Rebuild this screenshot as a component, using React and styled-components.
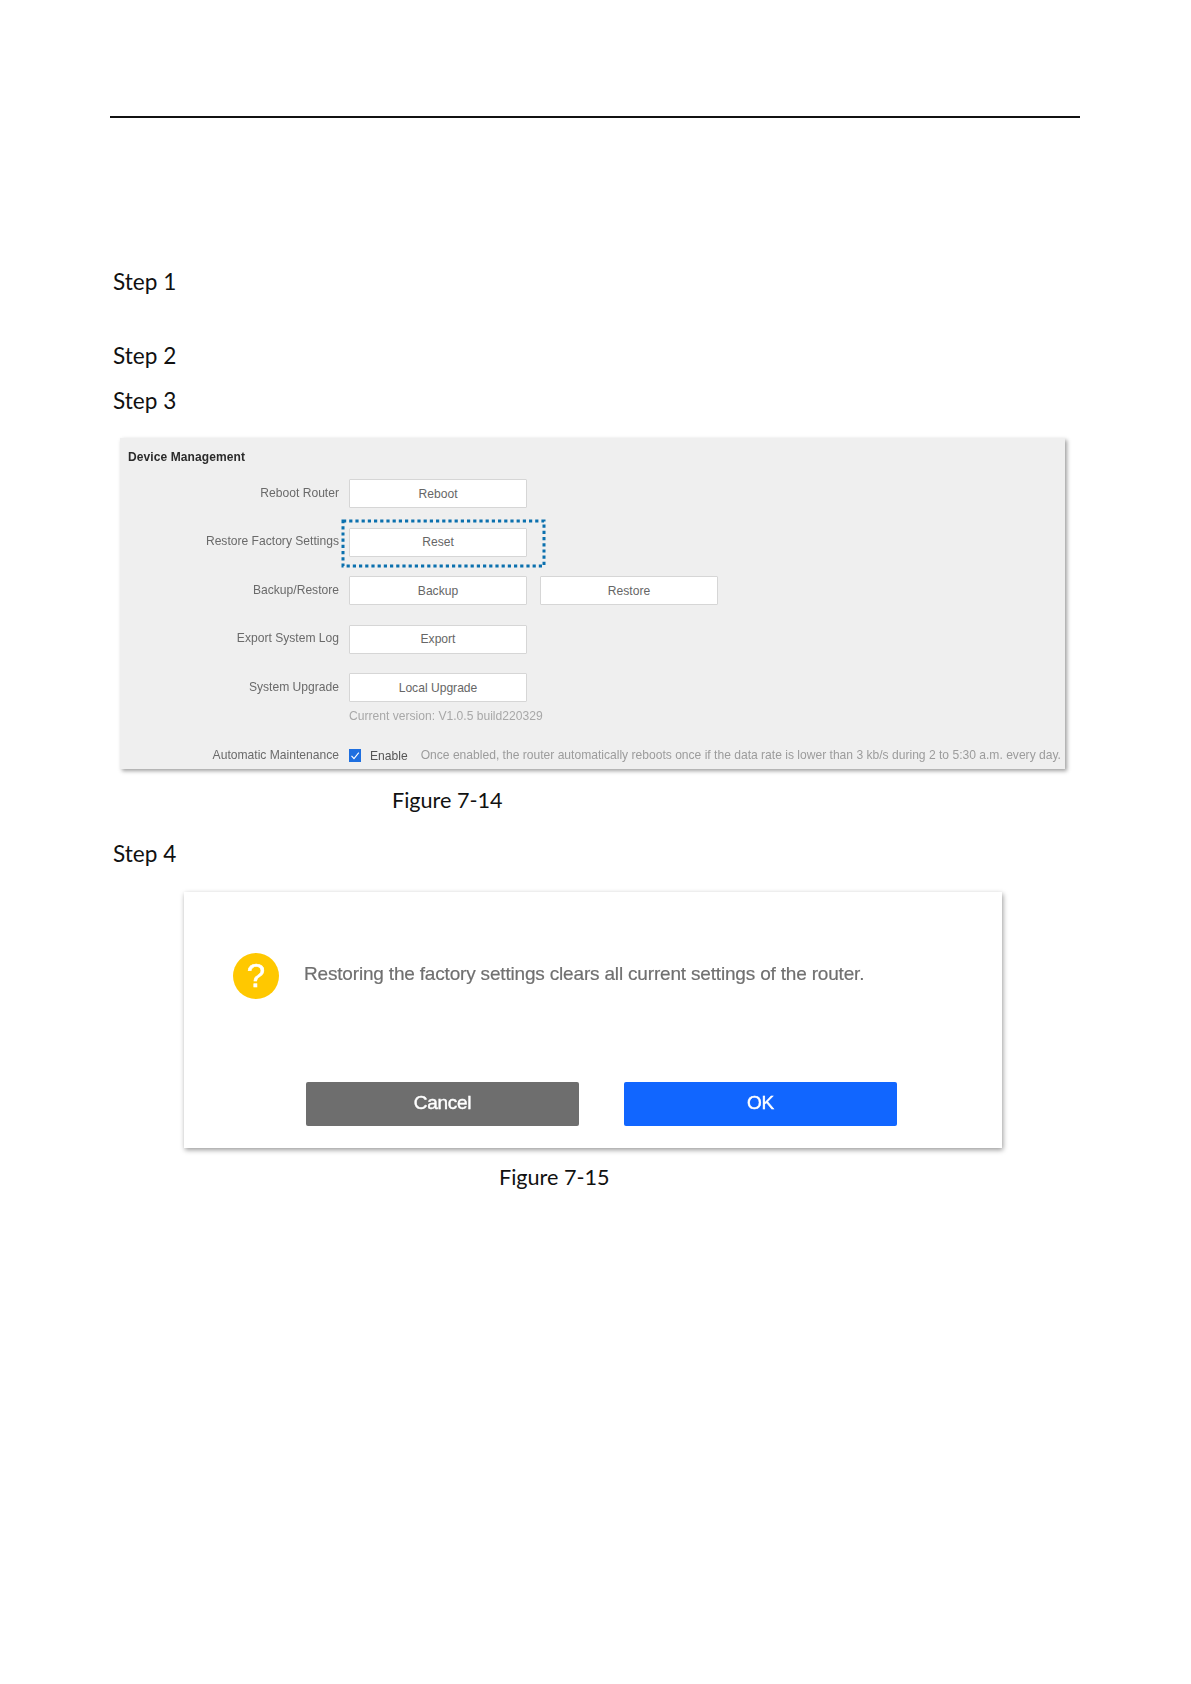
import styled, { createGlobalStyle } from 'styled-components';

const GlobalStyle = createGlobalStyle`
  html, body {
    margin: 0;
    padding: 0;
    background: #fff;
  }
`;

const rows = [
  { label: 'Reboot Router', buttons: ['Reboot'] },
  { label: 'Restore Factory Settings', buttons: ['Reset'], marked: true },
  { label: 'Backup/Restore', buttons: ['Backup', 'Restore'] },
  { label: 'Export System Log', buttons: ['Export'] },
  { label: 'System Upgrade', buttons: ['Local Upgrade'] },
];

const App = () => {
  return (
    <Page>
      <GlobalStyle />
      <Rule />

      <Step $top={149}>Step 1</Step>
      <Step $top={44}>Step 2</Step>
      <Step $top={15}>Step 3</Step>

      <Panel>
        <PanelTitle>Device Management</PanelTitle>
        <Rows>
          {rows.map((row) => (
            <Row key={row.label}>
              <RowLabel>{row.label}</RowLabel>
              {row.buttons.map((text) => (
                <PanelButton key={text}>
                  {text}
                  {row.marked && (
                    <Marker width="205" height="49" viewBox="0 0 205 49">
                      <rect
                        x="2"
                        y="2"
                        width="201"
                        height="45"
                        fill="none"
                        stroke="#0b70ae"
                        strokeWidth="3"
                        strokeDasharray="3.2 3"
                      />
                    </Marker>
                  )}
                </PanelButton>
              ))}
            </Row>
          ))}
        </Rows>
        <Version>Current version: V1.0.5 build220329</Version>
        <AutoRow>
          <RowLabel>Automatic Maintenance</RowLabel>
          <Check>
            <svg width="12" height="13" viewBox="0 0 12 13">
              <path d="M2.5 6.8 L5 9.6 L9.8 3.6" fill="none" stroke="#fff" strokeWidth="1.1" />
            </svg>
          </Check>
          <Enable>Enable</Enable>
          <Hint>
            Once enabled, the router automatically reboots once if the data rate is lower than 3 kb/s during 2 to 5:30 a.m. every day.
          </Hint>
        </AutoRow>
      </Panel>

      <Caption $left={282} $top={16}>Figure 7-14</Caption>
      <Step $top={24}>Step 4</Step>

      <Dialog>
        <Message>
          <QuestionIcon>?</QuestionIcon>
          <MessageText>Restoring the factory settings clears all current settings of the router.</MessageText>
        </Message>
        <DialogButtons>
          <DialogButton $bg="#6e6e6e">Cancel</DialogButton>
          <DialogButton $bg="#1166ff">OK</DialogButton>
        </DialogButtons>
      </Dialog>

      <Caption $left={389} $top={14}>Figure 7-15</Caption>
    </Page>
  );
};

const Page = styled.div`
  box-sizing: border-box;
  width: 1191px;
  height: 1684px;
  padding: 116px 110px 0;
  overflow: hidden;
  background: #fff;
`;

const Rule = styled.div`
  width: 970px;
  height: 2px;
  background: #111;
`;

const Step = styled.div`
  margin: ${(p) => p.$top}px 0 0 3px;
  font-family: Lato, sans-serif;
  font-size: 22.6px;
  line-height: 30px;
  color: #111;
`;

const Caption = styled.div`
  margin: ${(p) => p.$top}px 0 0 ${(p) => p.$left}px;
  font-family: Lato, sans-serif;
  font-size: 21.6px;
  line-height: 30px;
  color: #111;
`;

const Panel = styled.div`
  box-sizing: border-box;
  width: 945px;
  height: 331px;
  margin: 22px 0 0 10px;
  padding-top: 10px;
  background: #efefef;
  box-shadow: 2px 2px 4px rgba(0, 0, 0, 0.38);
  font-family: 'Liberation Sans', Arial, sans-serif;
  font-size: 12.1px;
  filter: blur(0.35px);
`;

const PanelTitle = styled.div`
  padding: 1px 0 0 8px;
  font-size: 12px;
  font-weight: bold;
  line-height: 16px;
  letter-spacing: 0.1px;
  color: #2b2b2b;
`;

const Rows = styled.div`
  display: flex;
  flex-direction: column;
  gap: 19.5px;
  margin-top: 14px;
`;

const Row = styled.div`
  display: flex;
  align-items: center;
  height: 29px;
`;

const RowLabel = styled.div`
  flex: 0 0 219px;
  margin-right: 10px;
  text-align: right;
  white-space: nowrap;
  color: #6a6a6a;

  ${Row} & {
    padding-bottom: 2px;
  }
`;

const PanelButton = styled.div`
  position: relative;
  box-sizing: border-box;
  display: flex;
  align-items: center;
  justify-content: center;
  width: 178px;
  height: 29px;
  background: #fff;
  border: 1px solid #d6d6d6;
  border-radius: 1px;
  color: #666;

  & + & {
    margin-left: 13px;
  }
`;

const Marker = styled.svg`
  position: absolute;
  left: -9px;
  top: -10px;
`;

const Version = styled.div`
  margin: 6px 0 0 229px;
  line-height: 16px;
  color: #a8a8a8;
`;

const AutoRow = styled.div`
  display: flex;
  align-items: center;
  height: 16px;
  margin-top: 23px;
`;

const Check = styled.div`
  display: flex;
  width: 12px;
  height: 13px;
  margin-top: 1px;
  background: #1e6fe0;
`;

const Enable = styled.div`
  margin: 1px 0 0 9px;
  color: #555;
`;

const Hint = styled.div`
  margin: -1px 0 0 13px;
  font-size: 12.08px;
  white-space: nowrap;
  color: #9c9c9c;
`;

const Dialog = styled.div`
  box-sizing: border-box;
  width: 818px;
  height: 256px;
  margin: 23px 0 0 74px;
  padding-top: 61px;
  background: #fff;
  box-shadow: 1px 2px 5px rgba(0, 0, 0, 0.4);
  font-family: 'Liberation Sans', Arial, sans-serif;
  filter: blur(0.5px);
`;

const Message = styled.div`
  display: flex;
  align-items: center;
  padding-left: 49px;
`;

const QuestionIcon = styled.div`
  display: flex;
  align-items: center;
  justify-content: center;
  width: 46px;
  height: 46px;
  border-radius: 50%;
  background: #ffc800;
  color: #fff;
  font-size: 33px;
  line-height: 46px;
  -webkit-text-stroke: 0.5px #fff;
`;

const MessageText = styled.div`
  margin: -4px 0 0 25px;
  font-size: 19px;
  letter-spacing: -0.18px;
  white-space: nowrap;
  color: #707070;
  -webkit-text-stroke: 0.2px #707070;
`;

const DialogButtons = styled.div`
  display: flex;
  gap: 45px;
  margin: 83px 0 0 122px;
`;

const DialogButton = styled.div`
  display: flex;
  align-items: center;
  justify-content: center;
  width: 273px;
  height: 44px;
  padding-bottom: 3px;
  box-sizing: border-box;
  background: ${(p) => p.$bg};
  border-radius: 2px;
  color: #fff;
  font-size: 19px;
  letter-spacing: -0.3px;
  -webkit-text-stroke: 0.4px #fff;
`;

export default App;
